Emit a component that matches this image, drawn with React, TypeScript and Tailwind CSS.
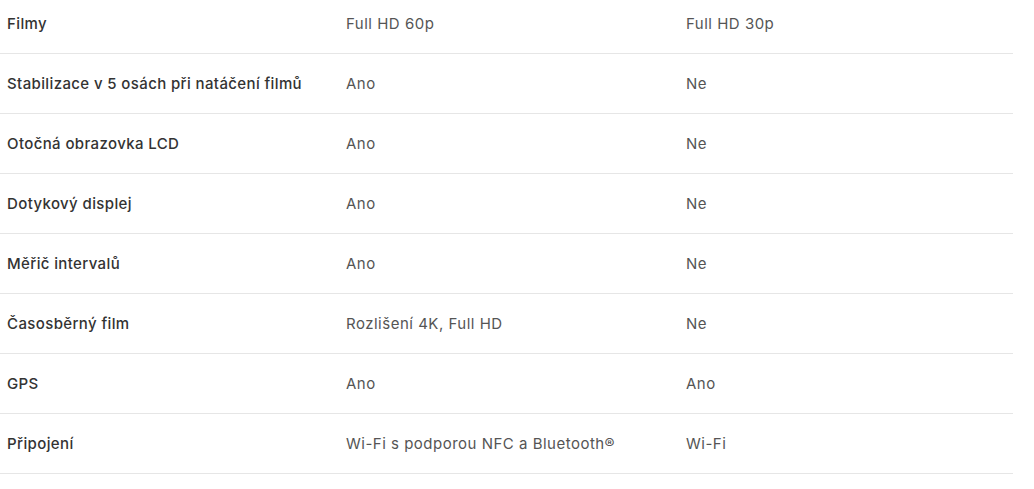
const rows: [string, string, string][] = [
  ["Filmy", "Full HD 60p", "Full HD 30p"],
  ["Stabilizace v 5 osách při natáčení filmů", "Ano", "Ne"],
  ["Otočná obrazovka LCD", "Ano", "Ne"],
  ["Dotykový displej", "Ano", "Ne"],
  ["Měřič intervalů", "Ano", "Ne"],
  ["Časosběrný film", "Rozlišení 4K, Full HD", "Ne"],
  ["GPS", "Ano", "Ano"],
  ["Připojení", "Wi-Fi s podporou NFC a Bluetooth®", "Wi-Fi"],
];

function SpecRow({ row }: { row: [string, string, string] }) {
  const [label, a, b] = row;
  return (
    <div className="grid grid-cols-[339px_340px_334px] h-[60px] items-center pt-[2px] border-b border-[#e6e6e6]">
      <div className="pl-[7px] font-medium tracking-[0.38px] text-[#333333]">{label}</div>
      <div className="pl-[7px] tracking-[0.5px] text-[#555555]">{a}</div>
      <div className="pl-[7px] tracking-[0.5px] text-[#555555]">{b}</div>
    </div>
  );
}

export default function App() {
  return (
    <div className="w-[1034px] h-[489px] overflow-hidden bg-white">
      <div
        className="-mt-[6px] w-[1013px] text-[15px]"
        style={{ fontFamily: "Inter, sans-serif" }}
      >
        {rows.map((row, i) => (
          <SpecRow row={row} key={`row-${i}`} />
        ))}
      </div>
    </div>
  );
}
